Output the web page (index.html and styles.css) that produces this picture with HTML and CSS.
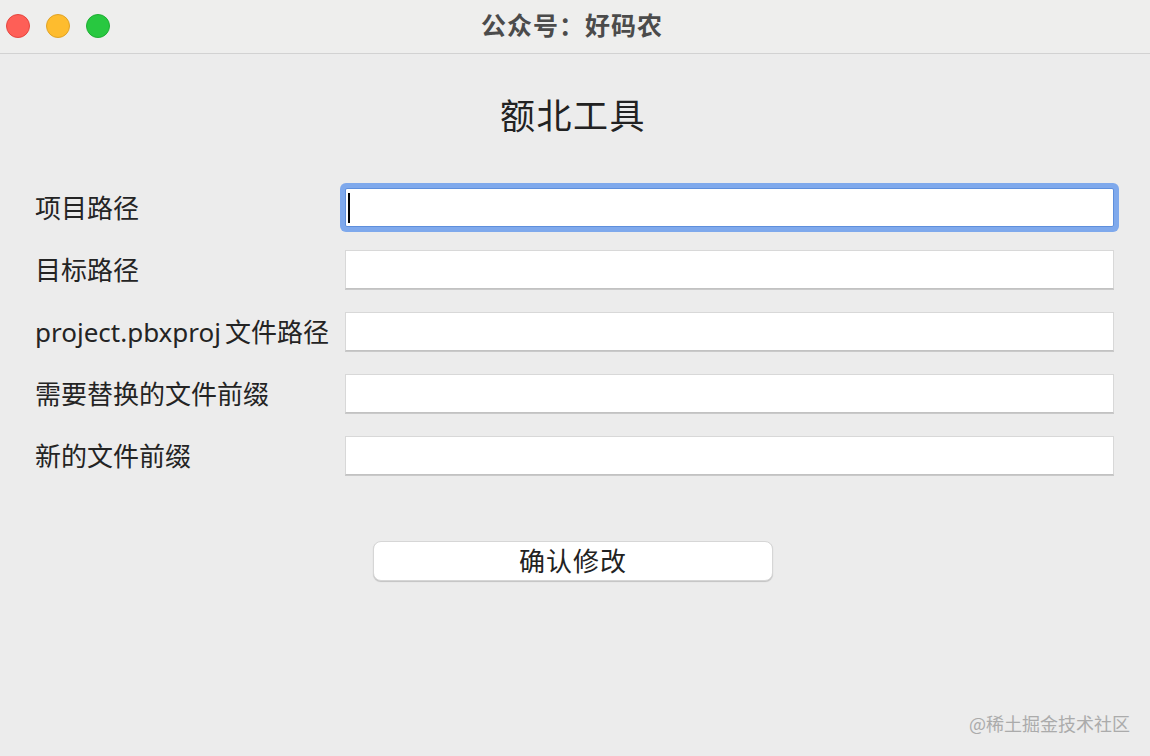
FILE: index.html
```html
<!DOCTYPE html>
<html lang="zh-CN">
<head>
<meta charset="utf-8">
<title>额北工具</title>
<link rel="stylesheet" href="styles.css">
</head>
<body>
<div class="window">
  <header class="titlebar">
    <div class="lights">
      <span class="light red"></span>
      <span class="light yellow"></span>
      <span class="light green"></span>
    </div>
    <div class="title">公众号：好码农</div>
  </header>
  <main class="content">
    <h1 class="heading">额北工具</h1>
    <div class="form">
      <label class="label">项目路径</label>
      <div class="field focused"><span class="caret"></span></div>
      <label class="label">目标路径</label>
      <div class="field"></div>
      <label class="label"><span class="latin">project.pbxproj</span>文件路径</label>
      <div class="field"></div>
      <label class="label">需要替换的文件前缀</label>
      <div class="field"></div>
      <label class="label">新的文件前缀</label>
      <div class="field"></div>
    </div>
    <div class="actions">
      <button class="btn" type="button">确认修改</button>
    </div>
  </main>
  <div class="watermark">@稀土掘金技术社区</div>
</div>
</body>
</html>
```

FILE: styles.css
```css
* { box-sizing: border-box; }
html, body {
  margin: 0;
  padding: 0;
  width: 1150px;
  height: 756px;
  overflow: hidden;
  background: #ececec;
  font-family: "Noto Sans", "Noto Sans CJK SC", sans-serif;
  color: #262626;
}
.window {
  position: relative;
  width: 1150px;
  height: 756px;
  display: flex;
  flex-direction: column;
}
.titlebar {
  position: relative;
  height: 54px;
  flex: 0 0 54px;
  background: #eeeeed;
  border-bottom: 1px solid #d2d2d2;
  display: flex;
  align-items: center;
  justify-content: center;
  padding-right: 6px;
}
.lights {
  position: absolute;
  left: 6px;
  top: 14px;
  display: flex;
  gap: 16px;
}
.light {
  width: 24px;
  height: 24px;
  border-radius: 50%;
  display: block;
}
.red { background: #fe5f57; border: 1px solid #e5463f; }
.yellow { background: #febc2e; border: 1px solid #e0a326; }
.green { background: #28c840; border: 1px solid #1eae33; }
.title {
  font-family: "Noto Sans CJK SC", sans-serif;
  font-weight: 700;
  font-size: 25px;
  color: #4b4b4b;
  line-height: 30px;
  letter-spacing: 1px;
  margin-bottom: 5px;
}
.content {
  flex: 1;
  display: flex;
  flex-direction: column;
  padding: 37px 36px 0 35px;
}
.heading {
  margin: 0 3px 0 0;
  text-align: center;
  font-family: "Noto Sans CJK SC", sans-serif;
  font-weight: 400;
  font-size: 35px;
  line-height: 46px;
  color: #222;
  letter-spacing: 1.5px;
}
.form {
  margin-top: 51px;
  display: grid;
  grid-template-columns: 310px 1fr;
  row-gap: 23px;
  align-items: center;
}
.label {
  font-size: 26px;
  line-height: 39px;
  height: 39px;
  color: #242424;
  white-space: nowrap;
  padding-top: 1px;
}
.latin {
  margin-right: 4px;
}
.field {
  height: 39px;
  background: #ffffff;
  border: 1px solid #d8d8d8;
  border-bottom-color: #c2c2c2;
  box-shadow: 0 1px 0 #c9c9c9;
  display: flex;
  align-items: center;
  padding-left: 2px;
}
.field.focused {
  border-color: #5e8fdc;
  border-radius: 2px;
  box-shadow: 0 0 0 5px #7fa9ec;
}
.caret {
  width: 2px;
  height: 30px;
  background: #000;
}
.actions {
  margin-top: 66px;
  display: flex;
  justify-content: center;
  padding-right: 3px;
}
.btn {
  width: 400px;
  height: 40px;
  background: #ffffff;
  border: 1px solid #d6d6d6;
  border-radius: 8px;
  box-shadow: 0 1px 1px rgba(0,0,0,0.18);
  font-family: "Noto Sans CJK SC", sans-serif;
  font-size: 26px;
  line-height: 36px;
  color: #222;
  padding: 0 0 2px 0;
  letter-spacing: 1px;
}
.watermark {
  position: absolute;
  right: 20px;
  bottom: 22px;
  font-family: "Noto Sans CJK SC", sans-serif;
  font-size: 18px;
  line-height: 22px;
  color: #ababab;
}
```
